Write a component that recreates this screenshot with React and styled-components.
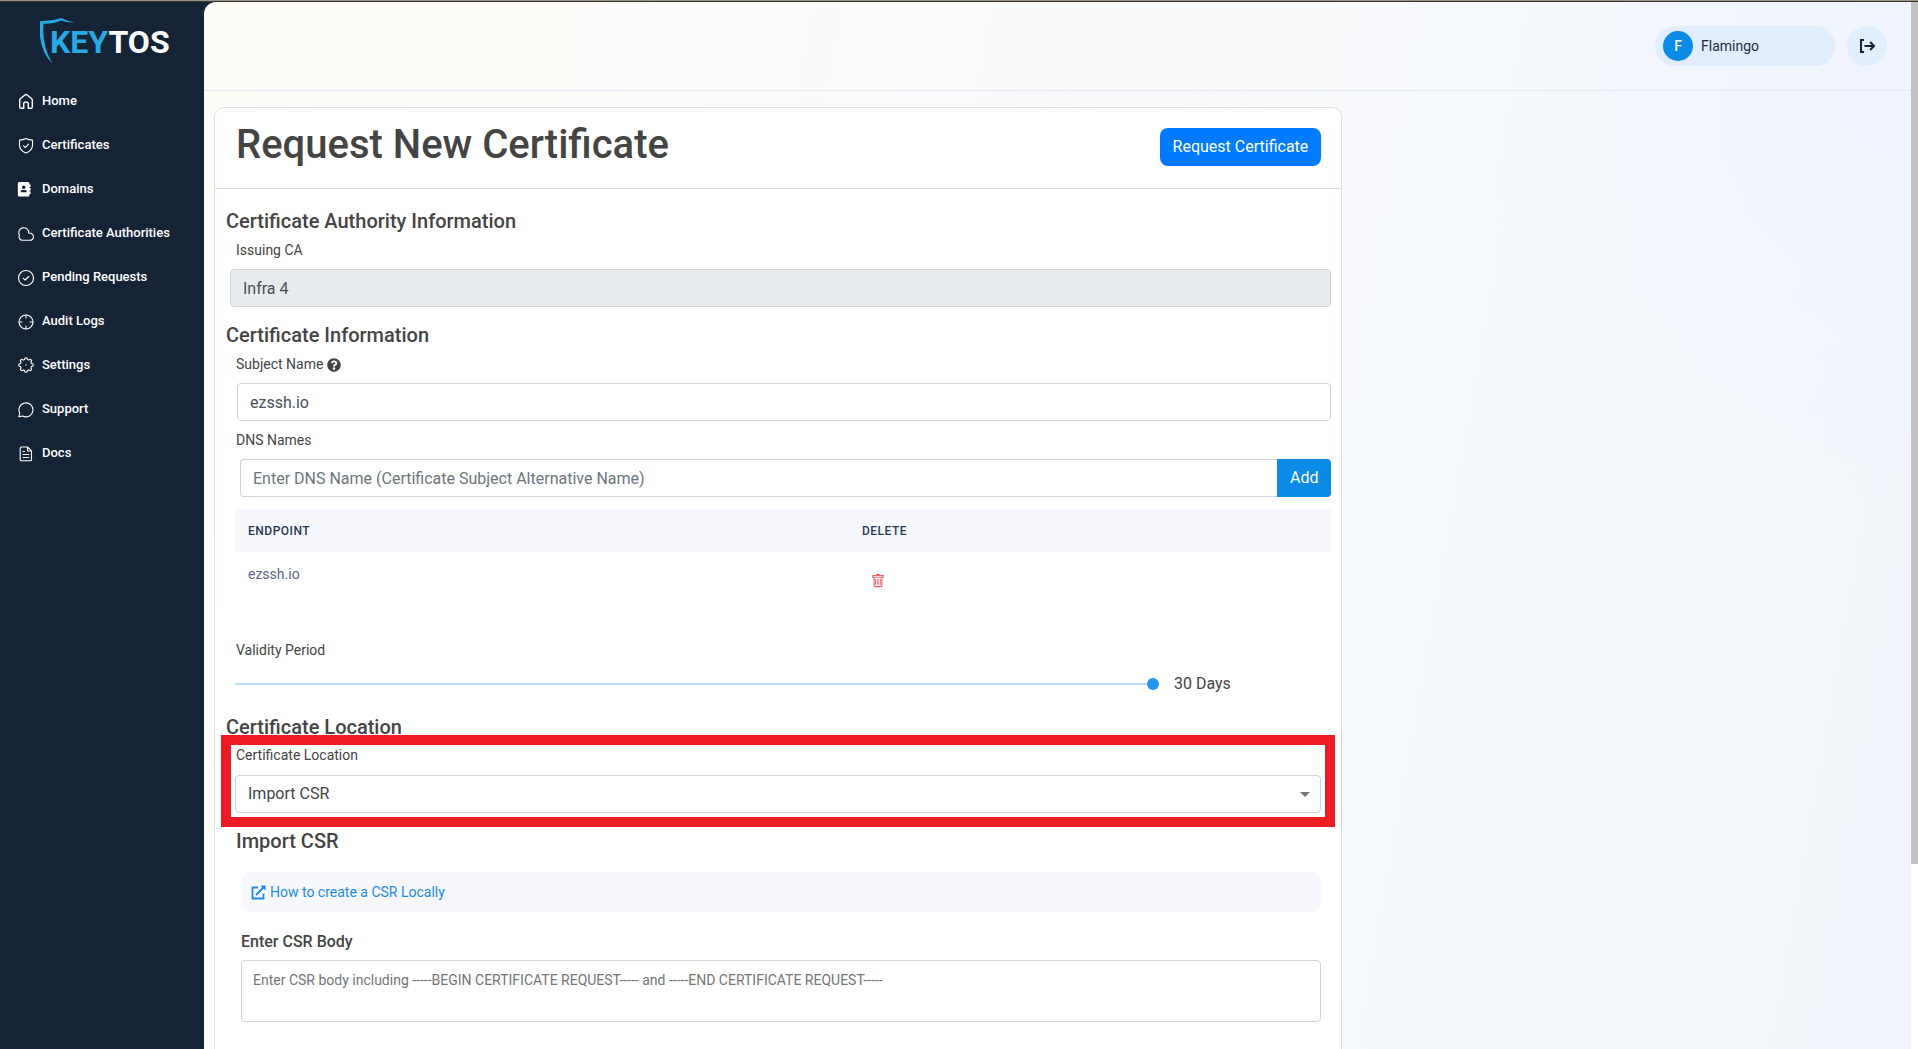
import React, { useState } from "react";
import styled, { createGlobalStyle } from "styled-components";
import { BsTrash } from "react-icons/bs";
import { FaQuestionCircle } from "react-icons/fa";

const Global = createGlobalStyle`
  *, *::before, *::after { box-sizing: border-box; }
  body { margin: 0; font-family: Roboto, "Liberation Sans", sans-serif; font-size: 16px; line-height: 24px; color: #444; background: #152336; }
  button, input, select, textarea { font: inherit; color: inherit; margin: 0; }
  h1, h2, h3, p { margin: 0; font-weight: 500; }
`;

const Window = styled.div`
  height: 100vh;
  display: flex;
  overflow: hidden;
  padding-top: 1px;
  border-top: 1px solid #9a9387;
  background: linear-gradient(#3a3732 0 1px, #152336 1px);
`;

const Sidebar = styled.aside`
  flex: 0 0 204px;
  padding: 16px 16px 0;
  color: #fff;
`;

const Brand = styled.a`
  display: block;
  margin-left: 24px;
  height: 48px;
  svg { display: block; }
`;

const Nav = styled.nav`
  display: flex;
  flex-direction: column;
  gap: 20px;
  margin-top: 23px;
`;

const NavLink = styled.a`
  display: flex;
  align-items: center;
  gap: 8px;
  height: 24px;
  color: #fff;
  font-size: 13px;
  font-weight: 500;
  text-decoration: none;
  white-space: nowrap;
  svg { flex: 0 0 18px; }
`;

const Main = styled.main`
  flex: 1;
  min-width: 0;
  overflow: hidden;
  border-top-left-radius: 12px;
  background:
    radial-gradient(circle at 100% 8%, rgba(239, 244, 255, 1) 0%, rgba(239, 244, 255, 0) 22%),
    linear-gradient(100deg, #fefcf7 0%, #f7fafc 66%, #f1f5fb 100%);
`;

const TopBar = styled.header`
  display: flex;
  justify-content: flex-end;
  align-items: center;
  gap: 12px;
  height: 89px;
  padding: 0 24px 0 0;
  border-bottom: 1px solid #e3e9fa;
`;

const UserChip = styled.button`
  display: flex;
  align-items: center;
  gap: 8px;
  width: 180px;
  height: 40px;
  padding: 0 8px;
  border: 0;
  border-radius: 20px;
  background: #e1edfc;
  color: #1c2b3e;
  font-size: 14px;
`;

const Avatar = styled.span`
  width: 30px;
  height: 30px;
  border-radius: 50%;
  background: #0b8ae6;
  color: #fff;
  font-weight: 500;
  line-height: 30px;
  text-align: center;
`;

const RoundButton = styled.button`
  display: flex;
  align-items: center;
  justify-content: center;
  width: 40px;
  height: 40px;
  padding: 0;
  border: 0;
  border-radius: 50%;
  background: #e1effc;
  color: #152336;
`;

const Card = styled.section`
  width: 66.1%;
  margin: 16px 0 0 10px;
  min-height: 100%;
  border: 1px solid #dedfe0;
  border-radius: 10px;
  background: #fff;
`;

const CardHeader = styled.div`
  display: flex;
  justify-content: space-between;
  align-items: flex-start;
  padding: 13px 20px 19px 21px;
  border-bottom: 1px solid #dedfe0;
`;

const Title = styled.h1`
  font-size: 40px;
  line-height: 48px;
`;

const PrimaryButton = styled.button`
  height: 38px;
  margin-top: 7px;
  padding: 0 13px;
  border: 0;
  border-radius: 8px;
  background: #007bff;
  color: #fff;
`;

const Form = styled.form`
  padding: 20px 10px 0 11px;
`;

const SectionTitle = styled.h2`
  font-size: 20px;
  line-height: 24px;
`;

const Label = styled.label`
  display: flex;
  align-items: center;
  gap: 4px;
  height: 21px;
  margin: 7px 0 8px 10px;
  font-size: 14px;
  line-height: 21px;
`;

const TextBox = styled.input`
  display: block;
  flex: 1;
  min-width: 0;
  width: 100%;
  height: 38px;
  padding: 0 12px;
  border: 1px solid #ced4da;
  border-radius: ${(p) => (p.$joined ? "4px 0 0 4px" : "4px")};
  ${(p) => p.$joined && "border-right: 0;"}
  background: #fff;
  color: #495057;
  &:disabled { background: #e8ebee; opacity: 1; }
  &::placeholder { color: #6c757d; opacity: 1; }
`;

const Row = styled.div`
  display: flex;
  align-items: center;
  padding-left: ${(p) => p.$indent}px;
  margin-bottom: ${(p) => p.$gap || 0}px;
`;

const AddButton = styled.button`
  width: 54px;
  height: 38px;
  padding: 0;
  border: 0;
  border-radius: 0 4px 4px 0;
  background: #0b8ae6;
  color: #fff;
`;

const Table = styled.table`
  flex: 1;
  border-collapse: collapse;
  table-layout: fixed;
  font-size: 14px;
  th {
    height: 43px;
    padding: 0 13px;
    background: #f6f8fe;
    color: #283a50;
    font-size: 12px;
    font-weight: 500;
    letter-spacing: 0.5px;
    text-align: left;
    text-transform: uppercase;
  }
  th:first-child { width: 56%; border-top-left-radius: 4px; }
  td { height: 64px; padding: 10px 13px; color: #5b6780; vertical-align: top; }
`;

const IconButton = styled.button`
  display: flex;
  margin: 12px 0 0 9px;
  padding: 0;
  border: 0;
  background: none;
  color: #e5303c;
`;

const Slider = styled.input`
  flex: 0 1 924px;
  min-width: 0;
  height: 30px;
  appearance: none;
  background: transparent;
  &::-webkit-slider-runnable-track { height: 2px; background: #b6dcfb; }
  &::-webkit-slider-thumb {
    appearance: none;
    width: 12px;
    height: 12px;
    margin-top: -5px;
    border-radius: 50%;
    background: #2196f3;
  }
`;

const SliderValue = styled.output`
  margin-left: 15px;
`;

const Highlight = styled.div`
  margin: -4px -4px 0 -5px;
  padding: 0 4px 4px;
  border: 10px solid #ed1c24;
`;

const HighlightLabel = styled(Label)`
  margin: 0 0 9px 1px;
`;

const SelectBox = styled.select`
  display: block;
  width: 100%;
  height: 38px;
  padding: 0 12px;
  appearance: none;
  border: 1px solid #ced4da;
  border-radius: 4px;
  background: #fff;
  color: #444;
`;

const SelectWrap = styled.div`
  display: grid;
  align-items: center;
  > * { grid-area: 1 / 1; }
  svg { justify-self: end; margin-right: 11px; pointer-events: none; }
`;

const CsrPanel = styled.div`
  padding: 2px 10px 0 15px;
`;

const CsrTitle = styled(SectionTitle)`
  margin-left: -5px;
`;

const HelpBar = styled.p`
  margin: 19px 0 18px;
  padding: 8px 10px;
  border-radius: 10px;
  background: #f6f8fe;
`;

const HelpLink = styled.a`
  display: flex;
  align-items: center;
  gap: 4px;
  color: #1c8be5;
  font-size: 14px;
  font-weight: 400;
  text-decoration: none;
`;

const BodyLabel = styled.label`
  display: block;
  margin-bottom: 6px;
  font-weight: 500;
`;

const Area = styled.textarea`
  display: block;
  width: 100%;
  height: 62px;
  padding: 7px 11px;
  border: 1px solid #ced4da;
  border-radius: 4px;
  resize: none;
  font-size: 14px;
  line-height: 24px;
  &::placeholder { color: #757575; opacity: 1; }
`;

const ScrollTrack = styled.div`
  flex: 0 0 7px;
  background: #fff;
`;

const ScrollThumb = styled.div`
  height: 82.3%;
  background: #c1c1c1;
`;

const Line = ({ children }) => (
  <svg width="18" height="18" viewBox="0 0 18 18" fill="none" stroke="currentColor" strokeWidth="1.1" strokeLinecap="round" strokeLinejoin="round" aria-hidden="true">
    {children}
  </svg>
);

const HomeIcon = () => (
  <Line>
    <path strokeWidth="1.400" d="M3.700 8 Q3.700 7.200 4.300 6.700 L9.200 2.800 Q10 2.200 10.800 2.800 L15.700 6.700 Q16.300 7.200 16.300 8 V15 Q16.300 16.200 15.100 16.200 H12.300 V12 Q12.300 10 10 10 Q7.700 10 7.700 12 V16.200 H4.900 Q3.700 16.200 3.700 15 Z" />
  </Line>
);
const ShieldIcon = () => (
  <Line>
    <path d="M10 2.500 C8 3.500 5.500 4 3.500 4.100 V9 C3.500 13 6 15.500 10 17.100 C14 15.500 16.500 13 16.500 9 V4.100 C14.500 4 12 3.500 10 2.500 Z" />
    <path d="M7.500 9.800 L9.400 11.500 L12.600 8.200" />
  </Line>
);
const BookIcon = () => (
  <svg width="18" height="18" viewBox="0 0 18 18" aria-hidden="true">
    <path fill="currentColor" d="M3 2 H12 Q13.500 2 13.500 3.500 V4.500 H14.600 V7 H13.500 V8 H14.600 V10.500 H13.500 V11.500 H14.600 V14 H13.500 V15 Q13.500 16.500 12 16.500 H3 Q1.800 16.500 1.800 15 V3.500 Q1.800 2 3 2 Z" />
    <circle cx="7.700" cy="7.200" r="1.700" fill="#152336" />
    <path fill="#152336" d="M4.700 12.300 V11.500 Q4.700 9.800 7.700 9.800 Q10.700 9.800 10.700 11.500 V12.300 Z" />
  </svg>
);
const CloudIcon = () => (
  <Line>
    <path d="M6.500 16.300 A3.500 3.500 0 0 1 3.400 11.300 A5 5 0 1 1 12.700 9 Q17.400 9.200 17.400 12.700 Q17.400 16.300 13.700 16.300 Z" />
  </Line>
);
const CheckIcon = () => (
  <Line>
    <circle cx="10" cy="10" r="7.500" />
    <path d="M7.200 10.300 L9.200 12 L12.800 8.500" />
  </Line>
);
const TargetIcon = () => (
  <Line>
    <circle cx="10" cy="10" r="7" />
    <path d="M10 3 V6 M10 14 V17 M3 10 H6 M14 10 H17" />
  </Line>
);
const gear = Array.from({ length: 48 }, (_, i) => {
  const a = (i / 48) * Math.PI * 2;
  const r = 6.4 + 0.8 * Math.tanh(3 * Math.cos(8 * a));
  return `${(10 + r * Math.cos(a)).toFixed(2)},${(9 + r * Math.sin(a)).toFixed(2)}`;
}).join(" ");
const GearIcon = () => (
  <Line>
    <polygon points={gear} />
    <circle cx="10" cy="9" r="0.700" fill="currentColor" stroke="none" />
  </Line>
);
const ChatIcon = () => (
  <Line>
    <path d="M3.800 13.200 A7 7 0 1 1 6.600 16 L2.800 16.800 Z" />
  </Line>
);
const DocIcon = () => (
  <Line>
    <path d="M5.500 3 H11.500 L15.500 7 V15.500 Q15.500 16.800 14.200 16.800 H5.500 Q4.200 16.800 4.200 15.500 V4.300 Q4.200 3 5.500 3 Z M11.500 3 V7 H15.500 M7 7.500 H8.500 M7 10.500 H12.800 M7 13.500 H12.800" />
  </Line>
);
const LogoutIcon = () => (
  <svg width="18" height="18" viewBox="0 0 18 18" fill="none" stroke="currentColor" strokeWidth="2" aria-hidden="true">
    <path d="M6 3 H3 V15 H6 M6.500 9 H16 M12.200 5 L16 9 L12.200 13" />
  </svg>
);
const ExternalIcon = () => (
  <svg width="15" height="15" viewBox="0 0 15 15" fill="none" stroke="currentColor" strokeWidth="1.800" aria-hidden="true">
    <path d="M7 2.500 H1.500 V13.500 H12.500 V8.500 M5 10 L12.500 2.500" />
    <path d="M9.500 0.500 H14.600 V5.600 Z" fill="currentColor" stroke="none" />
  </svg>
);

const Logo = () => (
  <svg width="132" height="48" viewBox="0 0 132 48" role="img" aria-label="Keytos">
    <path fill="#27a9e1" d="M0.300 3 Q11 3.600 21.300 0 Q27 3 34.500 4.400 Q28 5 21.300 2.400 Q13 6 3.500 5.700 Q1.500 28 12.800 46 Q-3 31 0.300 3 Z" />
    <text y="34.500" fontFamily="Roboto, sans-serif" fontWeight="700" fontSize="32">
      <tspan x="10" fill="#27a9e1">KEY</tspan>
      <tspan fill="#fff">TOS</tspan>
    </text>
  </svg>
);

const navItems = [
  ["Home", HomeIcon],
  ["Certificates", ShieldIcon],
  ["Domains", BookIcon],
  ["Certificate Authorities", CloudIcon],
  ["Pending Requests", CheckIcon],
  ["Audit Logs", TargetIcon],
  ["Settings", GearIcon],
  ["Support", ChatIcon],
  ["Docs", DocIcon],
];

export default function App() {
  const [days, setDays] = useState(30);
  return (
    <>
      <Global />
      <Window>
        <Sidebar>
          <Brand href="#home"><Logo /></Brand>
          <Nav>
            {navItems.map(([name, Icon]) => (
              <NavLink key={name} href="#"><Icon />{name}</NavLink>
            ))}
          </Nav>
        </Sidebar>
        <Main>
          <TopBar>
            <UserChip type="button"><Avatar>F</Avatar>Flamingo</UserChip>
            <RoundButton type="button" aria-label="Log out"><LogoutIcon /></RoundButton>
          </TopBar>
          <Card>
            <CardHeader>
              <Title>Request New Certificate</Title>
              <PrimaryButton type="submit" form="request">Request Certificate</PrimaryButton>
            </CardHeader>
            <Form id="request" onSubmit={(e) => e.preventDefault()}>
              <SectionTitle>Certificate Authority Information</SectionTitle>
              <Label htmlFor="ca">Issuing CA</Label>
              <Row $indent={4} $gap={16}><TextBox id="ca" defaultValue="Infra 4" disabled /></Row>

              <SectionTitle>Certificate Information</SectionTitle>
              <Label htmlFor="subject">Subject Name <FaQuestionCircle size={14} /></Label>
              <Row $indent={11} $gap={9}><TextBox id="subject" defaultValue="ezssh.io" /></Row>
              <Label htmlFor="dns">DNS Names</Label>
              <Row $indent={14} $gap={12}>
                <TextBox id="dns" $joined placeholder="Enter DNS Name (Certificate Subject Alternative Name)" />
                <AddButton type="button">Add</AddButton>
              </Row>
              <Row $indent={9} $gap={24}>
                <Table>
                  <thead><tr><th>Endpoint</th><th>Delete</th></tr></thead>
                  <tbody>
                    <tr>
                      <td>ezssh.io</td>
                      <td><IconButton type="button" aria-label="Delete ezssh.io"><BsTrash size={14} /></IconButton></td>
                    </tr>
                  </tbody>
                </Table>
              </Row>
              <Label htmlFor="validity">Validity Period</Label>
              <Row $indent={9} $gap={16}>
                <Slider id="validity" type="range" min="1" max="30" value={days} onChange={(e) => setDays(e.target.value)} />
                <SliderValue htmlFor="validity">{days} Days</SliderValue>
              </Row>

              <SectionTitle>Certificate Location</SectionTitle>
              <Highlight>
                <HighlightLabel htmlFor="location">Certificate Location</HighlightLabel>
                <SelectWrap>
                  <SelectBox id="location" defaultValue="csr"><option value="csr">Import CSR</option></SelectBox>
                  <svg width="10" height="5" viewBox="0 0 10 5" aria-hidden="true"><path d="M0 0 H10 L5 5 Z" fill="#757575" /></svg>
                </SelectWrap>
              </Highlight>

              <CsrPanel>
                <CsrTitle>Import CSR</CsrTitle>
                <HelpBar><HelpLink href="#csr"><ExternalIcon />How to create a CSR Locally</HelpLink></HelpBar>
                <BodyLabel htmlFor="body">Enter CSR Body</BodyLabel>
                <Area id="body" placeholder="Enter CSR body including -----BEGIN CERTIFICATE REQUEST----- and -----END CERTIFICATE REQUEST-----" />
              </CsrPanel>
            </Form>
          </Card>
        </Main>
        <ScrollTrack><ScrollThumb /></ScrollTrack>
      </Window>
    </>
  );
}
